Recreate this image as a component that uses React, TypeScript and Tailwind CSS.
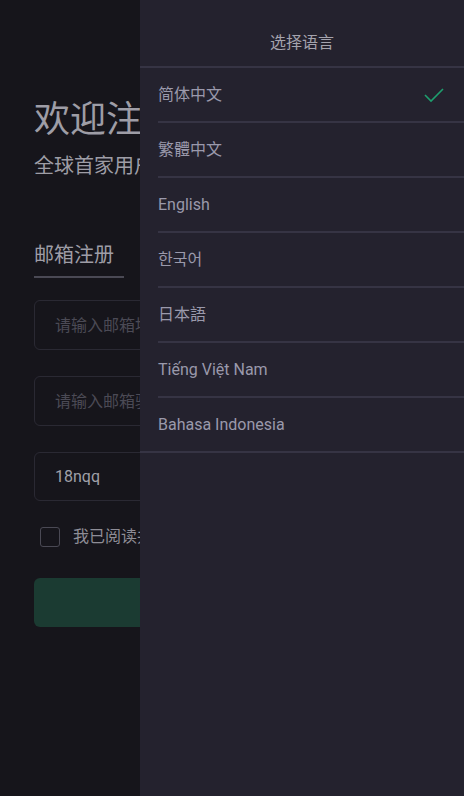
import { useState } from "react";

const languages = ["简体中文", "繁體中文", "English", "한국어", "日本語", "Tiếng Việt Nam", "Bahasa Indonesia"];

const font = { fontFamily: 'Roboto, "Noto Sans CJK SC", "Noto Sans CJK KR", sans-serif' };

export default function App() {
    const [lang, setLang] = useState("简体中文");
    const [agree, setAgree] = useState(false);

    return (
        <div className="relative w-[464px] h-[796px] overflow-hidden bg-[#16151b]" style={font}>
            {/* register page */}
            <div className="px-[34px] pt-[100px]">
                <h1 className="text-[36px] leading-[40px] text-[#9e9da6]">欢迎注册</h1>
                <p className="mt-[14px] text-[20px] leading-[24px] text-[#9e9da6]">全球首家用户自主交易平台</p>

                <div className="mt-[64px] flex">
                    <div className="w-[90px] pb-[8px] border-b-2 border-[#4a4954] text-[20px] leading-[26px] text-[#9e9da6]">
                        邮箱注册
                    </div>
                </div>

                <div className="mt-[22px] flex flex-col gap-[26px]">
                    <input
                        className="h-[50px] rounded-[6px] border border-[#2a2933] bg-transparent px-[20px] text-[16px] text-[#a0a0a8] placeholder:text-[#4b4a55] outline-none"
                        placeholder="请输入邮箱地址"
                    />
                    <input
                        className="h-[50px] rounded-[6px] border border-[#2a2933] bg-transparent px-[20px] text-[16px] text-[#a0a0a8] placeholder:text-[#4b4a55] outline-none"
                        placeholder="请输入邮箱验证码"
                    />
                    <input
                        className="h-[49px] rounded-[6px] border border-[#2a2933] bg-transparent px-[20px] text-[16px] text-[#a0a0a8] outline-none"
                        defaultValue="18nqq"
                    />
                </div>

                <label className="mt-[24px] ml-[6px] flex items-center gap-[13px] text-[16px] text-[#8e8d96]">
                    <span
                        className="w-[20px] h-[20px] rounded-[3px] border-[1.5px] border-[#4a4954]"
                        onClick={() => setAgree(!agree)}
                    />
                    我已阅读并同意《用户协议》
                </label>

                <button className="mt-[29px] w-full h-[49px] rounded-[6px] bg-[#1b3b32] text-[16px] text-[#8fb3a6]">注册</button>
            </div>

            {/* language drawer */}
            <div className="absolute top-0 right-0 bottom-0 w-[324px] bg-[#24222e]">
                <div className="h-[68px] pt-[30px] text-center text-[16px] leading-[26px] text-[#a4a3ad] border-b-2 border-[#363444]">
                    选择语言
                </div>
                <ul className="border-b-2 border-[#363444]">
                    {languages.map((item, i) => (
                        <li
                            key={item}
                            onClick={() => setLang(item)}
                            className={
                                i < languages.length - 1
                                    ? "ml-[18px] h-[55px] text-[16px] text-[#9a99ab]"
                                    : "ml-[18px] h-[53px] text-[16px] text-[#9a99ab]"
                            }
                        >
                            <div
                                className={
                                    i < languages.length - 1
                                        ? "w-full h-full pr-[20px] flex items-center justify-between border-b-2 border-[#363444]"
                                        : "w-full h-full pr-[20px] flex items-center justify-between"
                                }
                            >
                                <span>{item}</span>
                                {lang === item && (
                                    <svg width="20" height="16" viewBox="0 0 20 16">
                                        <path d="M1 8 L7 14 L19 2" fill="none" stroke="#1e9e6e" strokeWidth="1.6" />
                                    </svg>
                                )}
                            </div>
                        </li>
                    ))}
                </ul>
            </div>
        </div>
    );
}
